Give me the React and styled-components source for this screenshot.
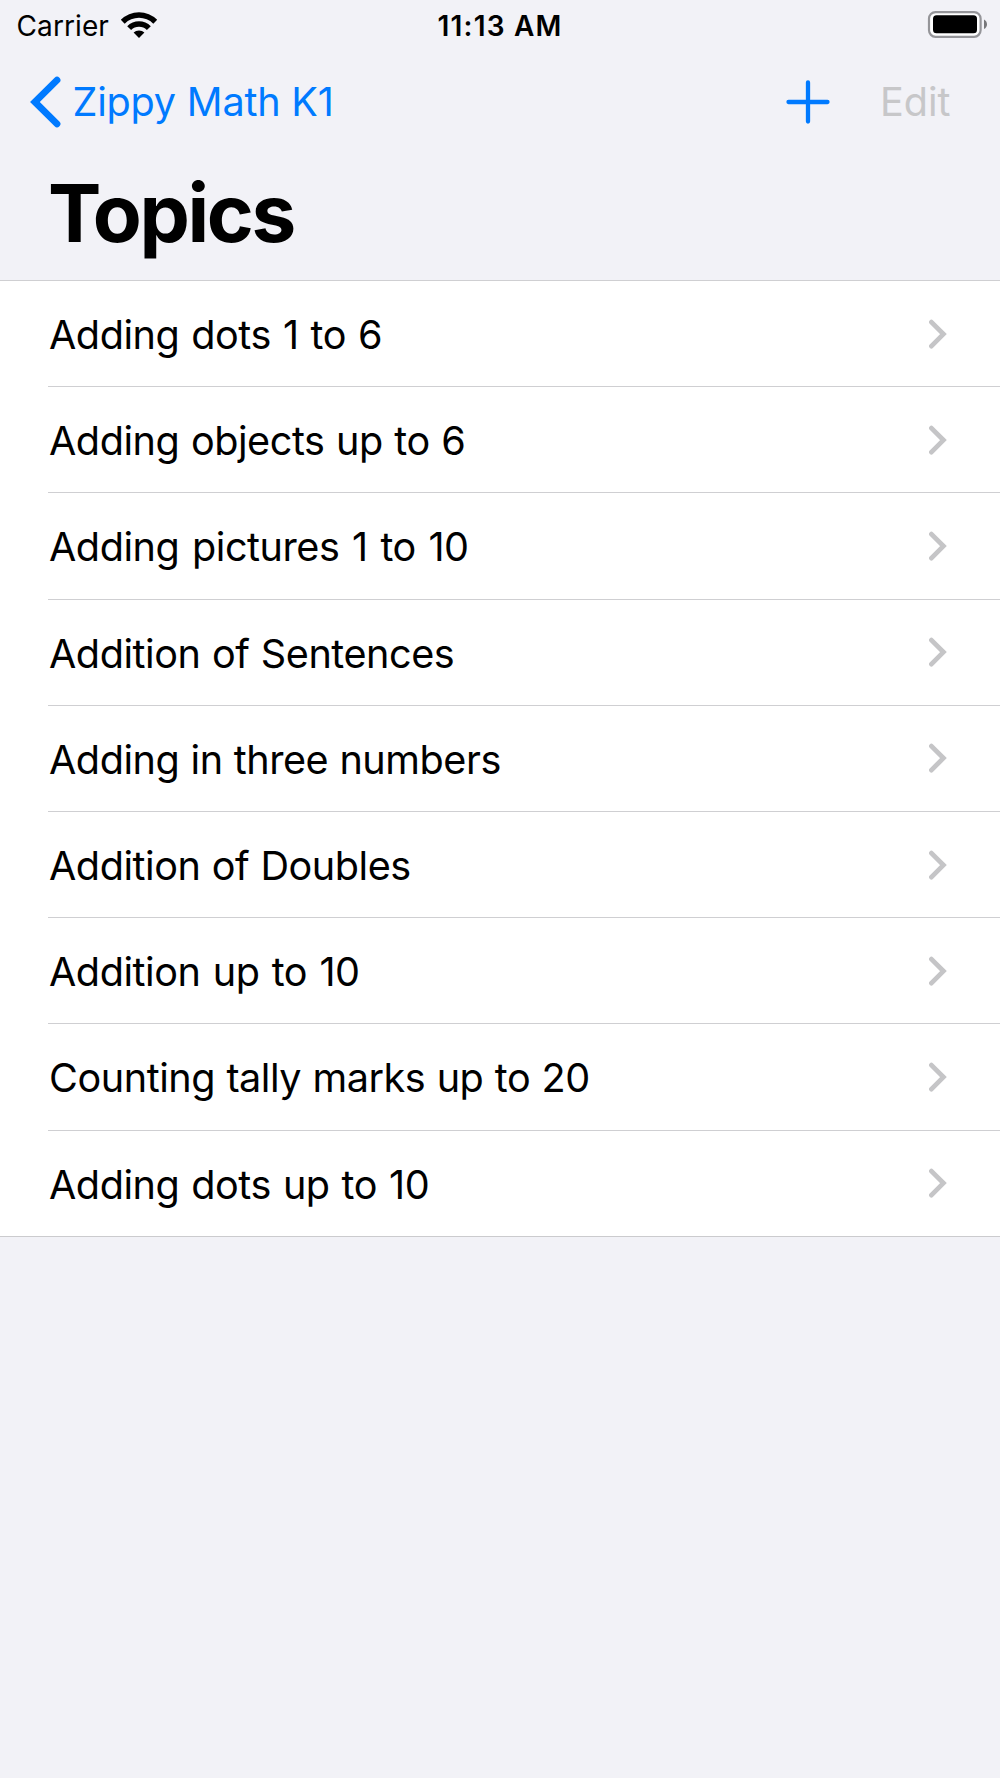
import styled, { createGlobalStyle } from "styled-components";

const topics = [
  { title: "Adding dots 1 to 6", wordGap: 1.3 },
  { title: "Adding objects up to 6", wordGap: 0.9 },
  { title: "Adding pictures 1 to 10", wordGap: 2 },
  { title: "Addition of Sentences", wordGap: 0.8 },
  { title: "Adding in three numbers", wordGap: 0.5 },
  { title: "Addition of Doubles", wordGap: 0.6 },
  { title: "Addition up to 10", wordGap: 1.6 },
  { title: "Counting tally marks up to 20", wordGap: 0.7 },
  { title: "Adding dots up to 10", wordGap: 1.3 },
];

const GlobalStyle = createGlobalStyle`
  body {
    margin: 0;
    background: #f2f2f7;
  }
`;

const Screen = styled.div`
  width: 1000px;
  min-height: 1778px;
  background: #f2f2f7;
  color: #000;
  font-family: Inter, "Liberation Sans", sans-serif;
  white-space: nowrap;
`;

const StatusBar = styled.div`
  display: grid;
  grid-template-columns: 1fr auto 1fr;
  align-items: center;
  height: 50px;
  padding: 0 13px;
  box-sizing: border-box;
`;

const Network = styled.div`
  display: flex;
  align-items: center;
  gap: 11px;
  padding-left: 3.5px;
`;

const Carrier = styled.span`
  padding-top: 1px;
  font-size: 28px;
  letter-spacing: 0.1px;
`;

const Time = styled.span`
  padding-top: 1px;
  font-size: 28px;
  font-weight: 600;
  letter-spacing: 1.2px;
`;

const Battery = styled.svg`
  justify-self: end;
`;

const NavBar = styled.div`
  display: flex;
  align-items: center;
  height: 104px;
  padding: 0 49.5px 0 30px;
`;

const NavButton = styled.button`
  display: flex;
  align-items: center;
  padding: 0;
  border: 0;
  background: none;
  color: ${(props) => (props.disabled ? "#c7c7c9" : "#007aff")};
  font-family: inherit;
  font-size: 39.6px;
`;

const BackButton = styled(NavButton)`
  gap: 10.5px;
  margin-right: auto;
  letter-spacing: -0.2px;
`;

const AddButton = styled(NavButton)`
  padding-bottom: 1px;
`;

const EditButton = styled(NavButton)`
  margin-left: 50px;
`;

const Title = styled.h1`
  height: 126px;
  margin: 0;
  padding-left: 48px;
  font-size: 80px;
  font-weight: 700;
  line-height: 118px;
  letter-spacing: -2.4px;
`;

const List = styled.ul`
  margin: 0;
  padding: 0;
  list-style: none;
  background: #fff;
  border-bottom: 1px solid #cbcbce;
`;

const Row = styled.li`
  padding-left: 48px;

  &:first-child {
    padding-left: 0;
  }
`;

const RowContent = styled.div`
  display: flex;
  align-items: center;
  justify-content: space-between;
  height: 106.2px;
  padding: 0 53px 0 1px;
  box-sizing: border-box;
  border-top: 1px solid #cfcfd2;

  ${Row}:first-child & {
    padding-left: 49px;
  }
`;

const RowLabel = styled.span`
  padding-top: 3px;
  font-size: 39.6px;
  letter-spacing: -0.45px;
  word-spacing: ${(props) => props.$wordGap}px;
`;

function WifiIcon() {
  return (
    <svg width="38" height="28" viewBox="0 0 38 28">
      <path d="M.8 8.8a25.8 25.8 0 0 1 36.4 0l-3.9 3.9a20.2 20.2 0 0 0-28.6 0z" />
      <path d="M7.2 15.2a16.7 16.7 0 0 1 23.6 0l-3.9 3.9a11.2 11.2 0 0 0-15.8 0z" />
      <path d="M13.6 21.6a7.7 7.7 0 0 1 10.8 0L19 27z" />
    </svg>
  );
}

function BatteryIcon() {
  return (
    <Battery width="60" height="28" viewBox="0 0 60 28">
      <rect x="2" y="1.1" width="51.6" height="24.7" rx="6.5" fill="#fff" stroke="#959599" strokeWidth="2.2" />
      <rect x="6" y="4.2" width="44" height="18" rx="3.5" />
      <path d="M57 8.4c4 2 4 7.6 0 9.6z" fill="#77777a" />
    </Battery>
  );
}

function BackIcon() {
  return (
    <svg width="32" height="52" viewBox="0 0 32 52" fill="none">
      <path d="M27 4.2 4.9 26 27 47.8" stroke="#007aff" strokeWidth="6.8" strokeLinecap="round" />
    </svg>
  );
}

function PlusIcon() {
  return (
    <svg width="44" height="44" viewBox="0 0 44 44">
      <path d="M22 2.500v39M2.500 22h39" stroke="#007aff" strokeWidth="4.300" strokeLinecap="round" />
    </svg>
  );
}

function ChevronIcon() {
  return (
    <svg width="18" height="30" viewBox="0 0 18 30" fill="none">
      <path d="m2.4 3.1 12 12-12 12" stroke="#c5c5c7" strokeWidth="4.8" strokeLinecap="round" />
    </svg>
  );
}

export default function App() {
  return (
    <Screen>
      <GlobalStyle />
      <StatusBar>
        <Network>
          <Carrier>Carrier</Carrier>
          <WifiIcon />
        </Network>
        <Time>11:13 AM</Time>
        <BatteryIcon />
      </StatusBar>
      <NavBar>
        <BackButton>
          <BackIcon />
          Zippy Math K1
        </BackButton>
        <AddButton aria-label="Add topic">
          <PlusIcon />
        </AddButton>
        <EditButton disabled>Edit</EditButton>
      </NavBar>
      <Title>Topics</Title>
      <List>
        {topics.map((topic) => (
          <Row key={topic.title}>
            <RowContent>
              <RowLabel $wordGap={topic.wordGap}>{topic.title}</RowLabel>
              <ChevronIcon />
            </RowContent>
          </Row>
        ))}
      </List>
    </Screen>
  );
}
